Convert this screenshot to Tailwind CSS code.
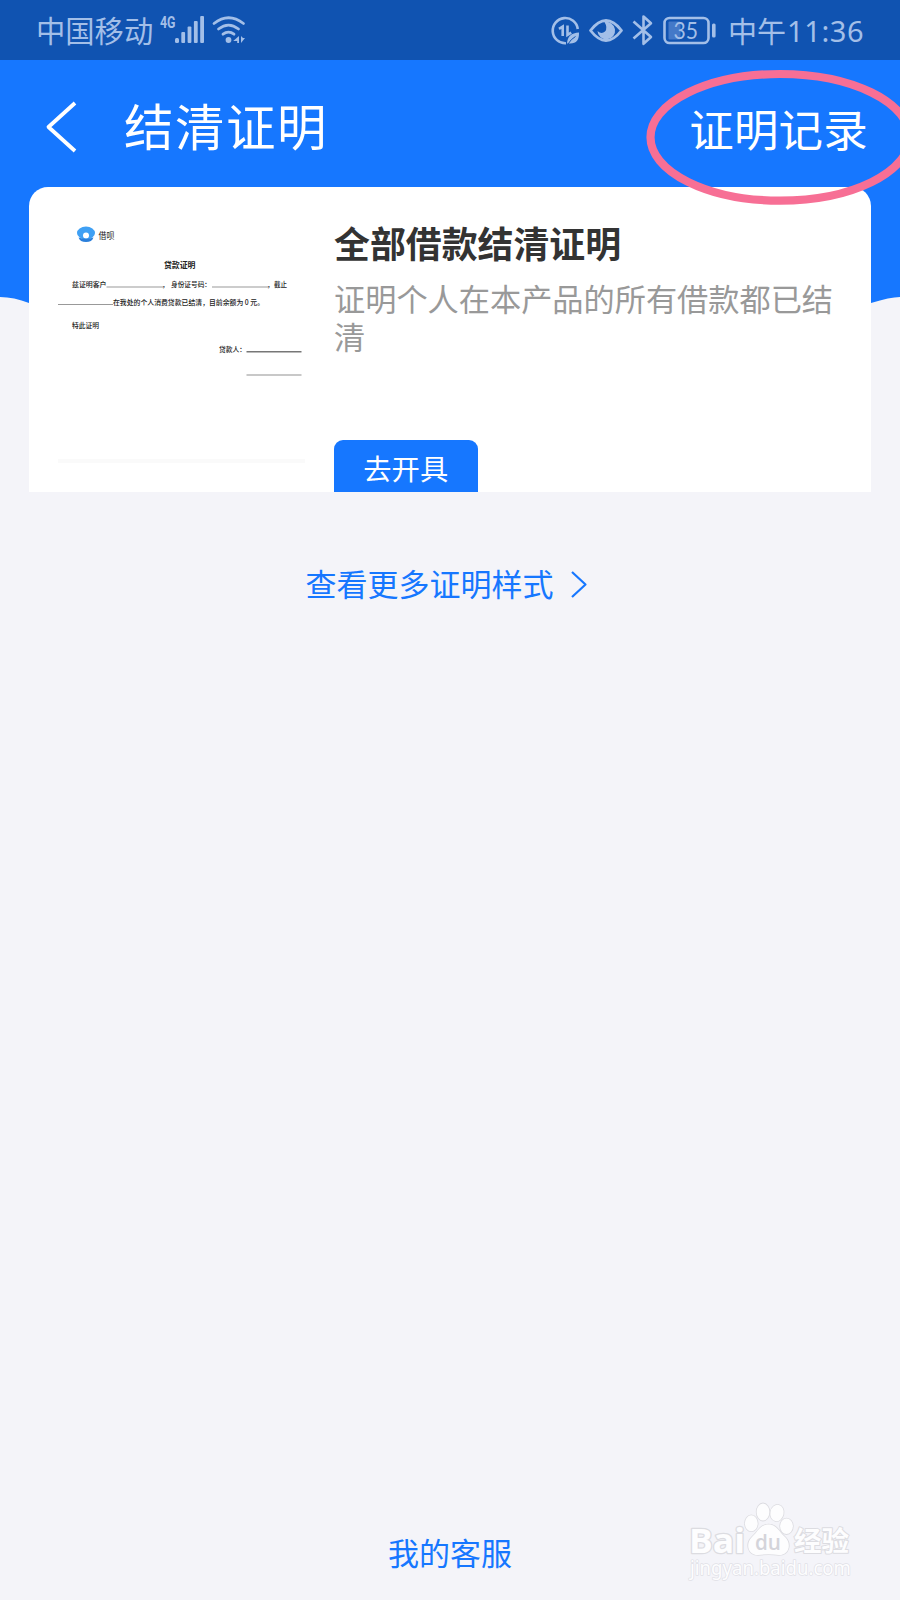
<!DOCTYPE html>
<html lang="zh-CN">
  <head>
    <meta charset="UTF-8" />
    <meta name="viewport" content="width=device-width, initial-scale=1.0" />
    <title>结清证明</title>
    <script src="https://cdn.jsdelivr.net/npm/@tailwindcss/browser@4"></script>
  </head>
  <body
    class="w-[900px] h-[1600px] relative overflow-hidden bg-[#f4f4f9] flex flex-col font-['Noto_Sans_CJK_SC',sans-serif]"
  >
    <!-- Status bar -->
    <div
      class="h-[60px] shrink-0 bg-[#1053b1] text-[#a3bfe8] flex items-center justify-between pl-[36px] pr-[35px] relative z-10"
    >
      <div class="flex items-center">
        <span class="text-[29.3px] leading-[58px] pb-[2px] w-[118px] whitespace-nowrap">中国移动</span>
        <svg width="96" height="60" viewBox="154 0 96 60" fill="currentColor">
          <text x="160" y="28" font-size="16" font-weight="700" font-family="Roboto" textLength="15.500" lengthAdjust="spacingAndGlyphs">4G</text>
          <rect x="175" y="38" width="4" height="5" rx="1.5" />
          <rect x="181.300" y="32" width="3.800" height="11" rx="1" />
          <rect x="187.600" y="26.500" width="3.800" height="16.500" rx="1" />
          <rect x="193.900" y="21" width="3.800" height="22" rx="1" />
          <rect x="200.200" y="16" width="3.800" height="27" rx="1" />
          <g fill="none" stroke="currentColor" stroke-width="2.800" stroke-linecap="round">
            <path d="M214 23.500Q228.500 12 243.500 23.500" />
            <path d="M218.500 29Q228.500 21.200 238.500 29" />
            <path d="M223 34.200Q228.500 30 234 34.200" />
          </g>
          <circle cx="228.500" cy="40" r="2.900" />
          <path d="M239 36v7h-1.800v-2h-4zM241 36v7l4-5h-2z" />
        </svg>
      </div>
      <div class="flex items-center">
        <svg width="176" height="60" viewBox="550 0 176 60" fill="none" stroke="currentColor" stroke-width="2.600">
          <!-- data saver -->
          <path d="M577.800 29A12.600 12.600 0 1 0 566 43.200" />
          <path d="M559 28.800l3.700-2.300v9.500M567.500 25.500v9.500l3.700-2.300" stroke-width="2.600" />
          <path d="M567 43.500Q567.500 33 579 32.500Q579.500 44 569.500 43.500Z" fill="currentColor" stroke="none" />
          <path d="M568 44Q571 39 575.500 36.500" stroke="#1053b1" stroke-width="1" />
          <!-- eye -->
          <path d="M590.500 30.500Q606 10.500 621.500 30.500Q606 50.500 590.500 30.500Z" stroke-width="2.800" stroke-linejoin="round" />
          <path d="M604.500 22A8.800 8.800 0 1 1 597.500 31Q601.500 34.500 605 31.500Q608 28 604.500 22Z" fill="currentColor" stroke="none" />
          <!-- bluetooth -->
          <path d="M633.500 21.500L651 37L643.500 43.800V16.500L651 23.200L633.500 38.500" stroke-linejoin="round" />
          <!-- battery -->
          <rect x="664.500" y="18" width="44" height="25" rx="5" />
          <rect x="668.500" y="21.500" width="12" height="18" rx="1" fill="#4479c8" stroke="none" />
          <rect x="712" y="23.500" width="3.600" height="14" rx="1.500" fill="currentColor" stroke="none" />
          <text x="673.500" y="38.500" font-size="22.500" font-family="Lato" fill="currentColor" stroke="none" textLength="24.500" lengthAdjust="spacingAndGlyphs">35</text>
        </svg>
        <div class="flex items-center text-[29px] leading-[58px] pb-px w-[139px] pl-[2px] whitespace-nowrap">
          <span>中午</span><span class="font-['Noto_Sans'] text-[29px] tracking-[0.6px] pl-px pt-[2px]">11:36</span>
        </div>
      </div>
    </div>

    <!-- Blue header backdrop with curved lower edge -->
    <svg class="absolute left-0 top-[60px]" width="900" height="270" viewBox="0 60 900 270">
      <path d="M0 60H900V297Q890 297 871 303Q450 350 29 303Q14 297 0 297Z" fill="#1677ff" />
    </svg>

    <!-- Nav -->
    <header class="relative h-[127px] shrink-0 text-white flex items-center pl-[45px]">
      <svg class="mt-[6px]" width="32" height="54" viewBox="0 0 32 54" fill="none" stroke="currentColor" stroke-width="3.800">
        <path d="M30 3L3.500 27L30 51" stroke-linejoin="round" />
      </svg>
      <h1 class="ml-[47px] mt-[2px] text-[49.500px] leading-[60px] tracking-[1.500px]">结清证明</h1>
      <a class="ml-auto mr-[32px] mt-[9px] text-[44.500px] leading-[60px] tracking-[0.200px]">证明记录</a>
    </header>

    <!-- Certificate card -->
    <main
      class="relative mx-[29px] w-[842px] h-[305px] shrink-0 bg-white rounded-t-[19px] overflow-hidden flex pt-[35px]"
    >
      <svg class="w-[305px] h-[270px] shrink-0" viewBox="29 222 305 270" font-size="8" fill="#222">
        <ellipse cx="86" cy="233" rx="9" ry="6.500" fill="#3fa0f4" />
        <circle cx="86" cy="235.500" r="3" fill="#fff" />
        <path d="M78.500 237.500Q86 240 93.500 237.500Q92 242 86 242Q80 242 78.500 237.500Z" fill="#2b7fdb" />
        <text x="98.500" y="238.800" font-size="9" textLength="16" lengthAdjust="spacingAndGlyphs">借呗</text>
        <text x="164" y="267.500" font-weight="700" textLength="31.500" lengthAdjust="spacingAndGlyphs">贷款证明</text>
        <g font-size="7" font-weight="500">
          <text x="72" y="287" textLength="34.500" lengthAdjust="spacingAndGlyphs">兹证明客户</text>
          <text x="162" y="287">，</text>
          <text x="171" y="287" textLength="40" lengthAdjust="spacingAndGlyphs">身份证号码：</text>
          <text x="267" y="287">，</text>
          <text x="274" y="287" textLength="13" lengthAdjust="spacingAndGlyphs">截止</text>
          <text x="113" y="305" textLength="151" lengthAdjust="spacingAndGlyphs">在我处的个人消费贷款已结清，目前余额为 0 元。</text>
          <text x="72" y="328" textLength="27" lengthAdjust="spacingAndGlyphs">特此证明</text>
          <text x="219" y="351.500" textLength="27" lengthAdjust="spacingAndGlyphs">贷款人：</text>
        </g>
        <path d="M106.500 287H163.500M212 287H268.500M58 304.500H113" stroke="#999" />
        <path d="M246.500 351.800H301.500" stroke="#777" stroke-width="1.600" />
        <path d="M246.500 375H301.500" stroke="#c8c8c8" stroke-width="2" />
        <path d="M58 461H305" stroke="#fafafa" stroke-width="4" />
      </svg>
      <div class="flex flex-col w-[508px]">
        <h2 class="text-[35.900px] leading-[40px] font-bold text-[#333] whitespace-nowrap">全部借款结清证明</h2>
        <p class="mt-[17px] text-[31.200px] leading-[37.500px] text-[#999]">
          证明个人在本产品的所有借款都已结清
        </p>
        <button
          class="mt-auto w-[143.500px] h-[52px] rounded-t-[9px] bg-[#1677ff] text-white text-[28.300px] leading-[52px] pt-[2px]"
        >
          去开具
        </button>
      </div>
    </main>

    <a class="mt-[67px] pl-[305.500px] flex items-center text-[#1677ff] text-[31px] leading-[48px]">
      查看更多证明样式
      <svg class="ml-[16px] mt-[2px]" width="18" height="30" viewBox="0 0 18 30" fill="none" stroke="currentColor" stroke-width="2.200">
        <path d="M2 3L15.500 15.500L2 28" stroke-linejoin="round" />
      </svg>
    </a>

    <a class="mt-auto mb-[24px] self-center text-[#1677ff] text-[31px] leading-[48px]">我的客服</a>

    <!-- Annotation around the records link -->
    <svg class="absolute left-[640px] top-[64px] z-20" width="260" height="148" viewBox="640 64 260 148">
      <ellipse cx="780" cy="137.300" rx="129.500" ry="63.300" fill="none" stroke="#f76f95" stroke-width="8.200" />
    </svg>

    <!-- Watermark -->
    <svg
      class="absolute left-[684px] top-[1496px]"
      width="176" height="90" viewBox="684 1496 176 90"
      fill="#fdfdfe" stroke="#dcdce1" stroke-width="1.600" stroke-linejoin="round" paint-order="stroke"
    >
      <text x="689" y="1553" font-family="Open Sans" font-weight="700" font-size="34" stroke-width="2.500" textLength="56" lengthAdjust="spacingAndGlyphs">Bai</text>
      <g>
        <ellipse cx="751.300" cy="1523.300" rx="6.400" ry="8" />
        <ellipse cx="763" cy="1512" rx="6.400" ry="8.600" />
        <ellipse cx="777" cy="1513" rx="6.600" ry="8.200" transform="rotate(12 777 1513)" />
        <ellipse cx="786.500" cy="1526.300" rx="6.400" ry="7.800" />
        <path d="M768.500 1524.500C777 1524.500 779 1532 785 1537C792 1544 789 1555 779 1555Q768.500 1553.500 758 1555C748 1555 745 1544 752 1537C758 1532 760 1524.500 768.500 1524.500Z" />
      </g>
      <text x="755" y="1549.500" font-family="Open Sans" font-size="21" font-weight="600" fill="#d4d4da" stroke="none" textLength="26" lengthAdjust="spacingAndGlyphs">du</text>
      <text x="794" y="1550.500" font-weight="700" font-size="27" stroke-width="2" textLength="55" lengthAdjust="spacingAndGlyphs">经验</text>
      <text x="690" y="1574.500" font-family="Noto Sans" font-size="19" fill="#fdfdfe" stroke="#e0e0e6" stroke-width="1.400" textLength="161" lengthAdjust="spacingAndGlyphs">jingyan.baidu.com</text>
    </svg>
  </body>
</html>
